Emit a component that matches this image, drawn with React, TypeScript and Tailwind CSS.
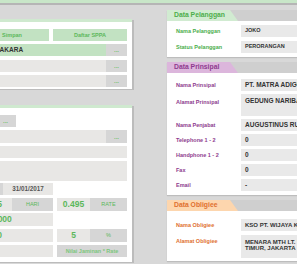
import React from 'react';

const font = "font-['Liberation_Sans',Arial,sans-serif]";

const Dots = ({ w = 'w-[21px]' }: { w?: string }) => (
    <div className={`${w} h-full bg-[#d6d6d6] flex items-center justify-center text-[6px] font-bold text-[#6cc06c] leading-none`}>...</div>
);

const Box = ({ className = '', children }: { className?: string; children?: React.ReactNode }) => (
    <div className={`h-full flex items-center ${className}`}>{children}</div>
);

type Row = { label: string; value: string; h?: string; lp?: string; multi?: boolean };

const SectionCard = ({
    title, tab, titleColor, labelColor, rows, valueSize, pt, gap, pb, className = '',
}: {
    title: string; tab: string; titleColor: string; labelColor: string; rows: Row[];
    valueSize: string; pt: string; gap: string; pb: string; className?: string;
}) => (
    <div className={`bg-white shadow-[0_1px_1px_rgba(0,0,0,0.12)] ${className}`}>
        <div className="h-[11px] bg-[#cfcfcf] relative">
            <div className={`absolute left-0 top-0 h-full w-[71px] ${tab} [clip-path:polygon(0_0,63px_0,71px_100%,0_100%)] flex items-center pl-[7px]`}>
                <span className={`text-[6.8px] font-bold ${titleColor} leading-none`}>{title}</span>
            </div>
        </div>
        <div className={`flex flex-col ${pt} ${gap} ${pb}`}>
            {rows.map((r) => (
                <div key={r.label} className={`flex items-start ${r.h ?? 'h-[12px]'}`}>
                    <div className={`w-[74px] pl-[9px] ${r.lp ?? 'pt-[3px]'} text-[5.5px] font-bold leading-[6px] ${labelColor}`}>{r.label}</div>
                    <div className={`flex-1 h-full bg-[#e9e9e9] pl-[4px] ${valueSize} font-bold text-[#333] ${r.multi ? 'pt-[4px] leading-[6px]' : 'flex items-center leading-none'}`}>
                        {r.value.split('\n').map((l) => <div key={l} className="whitespace-nowrap">{l}</div>)}
                    </div>
                </div>
            ))}
        </div>
    </div>
);

export default function App() {
    return (
        <div className={`w-[297px] h-[264px] overflow-hidden bg-[#d8d8d8] ${font}`}>
            <div className="h-[3px] bg-[#c8e6c8]" />
            <div className="h-[2px] bg-[#b5b5b5]" />
            <div className="flex">
                {/* left column, partly scrolled out of view */}
                <div className="w-[170px] -ml-[38px] shrink-0 flex flex-col">
                    <div className="mt-[14px] bg-white border-t-[3px] border-[#cfe9cf] shadow-[2px_1px_0_#bcbcbc] px-[5px] pt-[7px] pb-[2px] flex flex-col">
                        <div className="h-[12px] flex justify-end gap-[4px]">
                            <div className="w-[74px] h-full bg-[#c2e2c2] flex items-center justify-center text-[5.5px] font-bold text-[#5cb85c]">Simpan</div>
                            <div className="w-[74px] h-full bg-[#c2e2c2] flex items-center justify-center text-[5.5px] font-bold text-[#5cb85c]">Daftar SPPA</div>
                        </div>
                        <div className="h-[12px] mt-[3px] flex">
                            <Box className="flex-1 bg-[#c2e2c2] pl-[29px] text-[6.5px] font-bold text-[#333]">JAKARA</Box>
                            <Dots />
                        </div>
                        <div className="h-[12px] mt-[4px] flex">
                            <Box className="flex-1 bg-[#e8e7e5]" />
                            <Dots />
                        </div>
                        <div className="h-[12px] mt-[3px] flex">
                            <Box className="flex-1 bg-[#e8e7e5]" />
                            <Dots />
                        </div>
                    </div>

                    <div className="mt-[16px] bg-white border-t-[3px] border-[#cfe9cf] shadow-[2px_1px_0_#bcbcbc] px-[5px] pt-[7px] pb-[5px] flex flex-col">
                        <div className="h-[12px] flex">
                            <Box className="w-[28px] bg-[#e8e7e5]" />
                            <Dots />
                        </div>
                        <div className="h-[13px] mt-[3px] flex">
                            <Box className="flex-1 bg-[#e8e7e5]" />
                            <Dots />
                        </div>
                        <div className="h-[12px] mt-[3px] flex">
                            <Box className="flex-1 bg-[#e8e7e5]" />
                        </div>
                        <div className="h-[20px] mt-[3px] flex">
                            <Box className="flex-1 bg-[#e8e7e5]" />
                        </div>
                        <div className="h-[12px] mt-[2px] flex">
                            <Box className="w-[36px] bg-[#d6d6d6]" />
                            <Box className="w-[50px] bg-[#e8e7e5] justify-center text-[6.3px] font-bold text-[#555]">31/01/2017</Box>
                        </div>
                        <div className="h-[13px] mt-[3px] flex">
                            <Box className="w-[45px] bg-[#e8e7e5] justify-end pr-[10px] text-[8.5px] font-bold text-[#5cb85c]">365</Box>
                            <Box className="w-[41px] bg-[#d6d6d6] justify-center text-[5.5px] text-[#5cb85c]">HARI</Box>
                            <Box className="w-[33px] ml-[4px] bg-[#e8e7e5] justify-center text-[8.5px] font-bold text-[#5cb85c]">0.495</Box>
                            <Box className="flex-1 bg-[#d6d6d6] justify-center text-[5.5px] text-[#5cb85c]">RATE</Box>
                        </div>
                        <div className="h-[13px] mt-[2px] flex">
                            <Box className="w-[86px] bg-[#e8e7e5] pl-[7px] text-[8.5px] font-bold text-[#5cb85c]">1.000.000</Box>
                        </div>
                        <div className="h-[13px] mt-[3px] flex">
                            <Box className="w-[86px] bg-[#e8e7e5] justify-end pr-[51px] text-[8.5px] font-bold text-[#5cb85c]">50.000</Box>
                            <Box className="w-[33px] ml-[4px] bg-[#e8e7e5] justify-center text-[8.5px] font-bold text-[#5cb85c]">5</Box>
                            <Box className="flex-1 bg-[#d6d6d6] justify-center text-[5.5px] text-[#5cb85c]">%</Box>
                        </div>
                        <div className="h-[12px] mt-[3px] flex">
                            <Box className="w-[86px] bg-[#e8e7e5]" />
                            <Box className="flex-1 ml-[4px] bg-[#d6d6d6] justify-center text-[5.5px] font-bold text-[#7cc67c]">Nilai Jaminan * Rate</Box>
                        </div>
                    </div>
                </div>

                {/* right column */}
                <div className="ml-[35px] w-[170px] shrink-0 flex flex-col">
                    <SectionCard
                        className="mt-[5px]"
                        title="Data Pelanggan"
                        tab="bg-[#d1ebd1]"
                        titleColor="text-[#4cae4c]"
                        labelColor="text-[#4cae4c]"
                        valueSize="text-[5.5px]"
                        pt="pt-[4px]" gap="gap-[4px]" pb="pb-[4px]"
                        rows={[
                            { label: 'Nama Pelanggan', value: 'JOKO' },
                            { label: 'Status Pelanggan', value: 'PERORANGAN' },
                        ]}
                    />
                    <SectionCard
                        className="mt-[5px]"
                        title="Data Prinsipal"
                        tab="bg-[#dcb6dc]"
                        titleColor="text-[#8e3b8e]"
                        labelColor="text-[#8e3b8e]"
                        valueSize="text-[6.5px]"
                        pt="pt-[6px]" gap="gap-[3px]" pb="pb-[4px]"
                        rows={[
                            { label: 'Nama Prinsipal', value: 'PT. MATRA ADIGUNA' },
                            { label: 'Alamat Prinsipal', value: 'GEDUNG NARIBAYA', h: 'h-[22px]', lp: 'pt-[5px]', multi: true },
                            { label: 'Nama Penjabat', value: 'AUGUSTINUS RUSLI' },
                            { label: 'Telephone 1 - 2', value: '0' },
                            { label: 'Handphone 1 - 2', value: '0' },
                            { label: 'Fax', value: '0' },
                            { label: 'Email', value: '-' },
                        ]}
                    />
                    <SectionCard
                        className="mt-[5px]"
                        title="Data Obligiee"
                        tab="bg-[#fdd6ae]"
                        titleColor="text-[#e07030]"
                        labelColor="text-[#e07030]"
                        valueSize="text-[6px]"
                        pt="pt-[8px]" gap="gap-[4px]" pb="pb-[3px]"
                        rows={[
                            { label: 'Nama Obligiee', value: 'KSO PT. WIJAYA KARYA' },
                            { label: 'Alamat Obligiee', value: 'MENARA MTH LT. 7\nTIMUR, JAKARTA', h: 'h-[23px]', multi: true },
                        ]}
                    />
                </div>
            </div>
        </div>
    );
}
